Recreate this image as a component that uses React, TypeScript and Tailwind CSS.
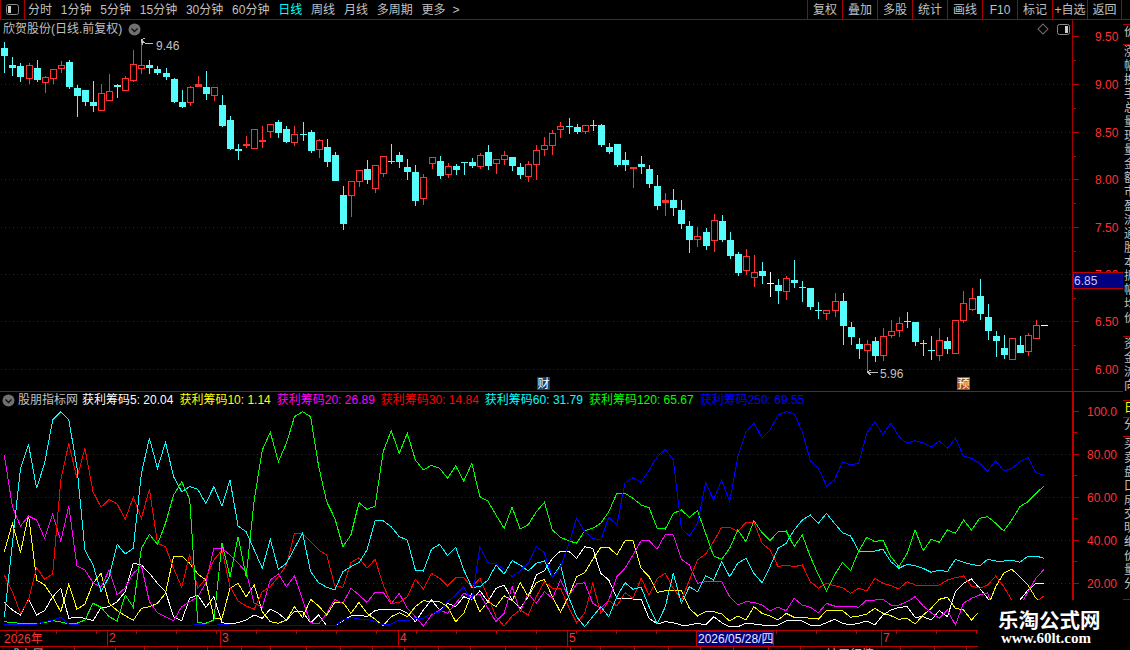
const FONT = "font-['Liberation_Sans','Noto_Sans_CJK_SC',sans-serif]"

const xAt = (i: number) => Math.round(4.33 + 8.06 * i)

// high, low, body top, body bottom, kind
type Candle = [number, number, number, number, string]
const candles: Candle[] = [
  [42,73,48,56,"c"],[57,76,65,68,"c"],[63,82,66,77,"c"],[63,84,65,79,"r"],[60,82,68,80,"c"],[76,93,77,83,"r"],[69,84,69,79,"r"],[61,73,65,69,"r"],[60,89,62,87,"c"],[85,117,88,96,"c"],
  [90,106,90,102,"c"],[81,112,102,106,"c"],[84,111,93,111,"r"],[74,101,91,101,"r"],[84,98,85,87,"c"],[76,91,78,91,"r"],[50,82,64,81,"r"],[40,74,65,69,"r"],[60,74,65,68,"c"],[66,75,69,73,"c"],
  [68,80,73,77,"c"],[78,103,79,102,"c"],[90,108,102,107,"c"],[86,106,87,103,"r"],[76,87,84,87,"r"],[71,100,87,94,"c"],[87,101,87,96,"r"],[95,127,105,126,"c"],[116,150,120,149,"c"],[144,160,149,151,"c"],
  [136,148,144,146,"r"],[129,149,129,149,"r"],[126,148,140,142,"r"],[124,138,124,132,"r"],[120,138,122,133,"c"],[126,143,129,142,"c"],[126,146,134,143,"r"],[122,141,134,135,"c"],[130,153,132,151,"c"],[139,158,140,150,"r"],
  [139,167,147,162,"c"],[152,181,155,181,"c"],[186,230,195,224,"c"],[181,217,181,196,"r"],[170,187,170,182,"r"],[160,184,169,180,"c"],[165,193,165,189,"r"],[156,177,156,174,"r"],[144,164,161,162,"c"],[152,168,155,162,"c"],
  [159,180,167,172,"c"],[165,206,172,201,"c"],[174,205,177,199,"r"],[157,169,157,164,"r"],[156,179,161,176,"c"],[163,178,166,175,"r"],[164,175,166,170,"c"],[162,175,162,163,"c"],[158,168,162,166,"c"],[153,169,155,167,"r"],
  [145,170,152,166,"c"],[159,174,159,164,"r"],[151,165,155,160,"r"],[157,171,157,166,"c"],[163,179,167,175,"c"],[161,182,164,177,"r"],[145,180,150,165,"r"],[137,156,145,150,"r"],[130,155,133,146,"r"],[122,138,126,130,"r"],
  [118,134,126,127,"c"],[124,134,127,132,"c"],[125,134,125,132,"r"],[120,131,125,126,"c"],[124,147,125,145,"c"],[143,154,147,152,"c"],[144,167,144,165,"c"],[152,171,160,165,"c"],[167,188,167,169,"r"],[156,174,164,167,"c"],
  [165,188,169,184,"c"],[175,210,186,206,"c"],[193,216,200,203,"r"],[189,216,200,208,"c"],[200,229,210,224,"c"],[221,253,226,240,"c"],[227,247,236,240,"r"],[228,250,232,246,"c"],[214,252,220,241,"r"],[215,242,221,240,"c"],
  [232,259,240,256,"c"],[252,276,254,273,"c"],[249,275,256,271,"r"],[255,287,272,278,"r"],[262,284,271,276,"c"],[272,297,283,284,"w"],[279,304,285,291,"c"],[276,300,278,292,"r"],[260,288,280,283,"c"],[281,302,287,288,"c"],
  [288,310,288,307,"c"],[302,319,310,311,"c"],[310,320,310,314,"r"],[293,317,301,311,"r"],[293,345,301,326,"c"],[322,345,327,337,"c"],[338,359,344,349,"c"],[340,371,344,351,"r"],[337,362,341,356,"c"],[328,361,336,356,"r"],
  [320,338,331,336,"r"],[317,337,323,331,"r"],[312,328,321,322,"c"],[322,346,322,342,"c"],[340,356,343,344,"c"],[336,360,350,351,"c"],[328,361,340,356,"r"],[337,354,341,349,"c"],[320,354,320,354,"r"],[291,323,303,321,"r"],
  [288,311,298,310,"r"],[279,320,296,314,"c"],[304,340,317,331,"c"],[331,357,336,341,"c"],[335,359,348,355,"c"],[338,360,338,360,"r"],[336,353,345,353,"c"],[333,356,335,352,"r"],[320,339,325,339,"r"],[325,326,325,326,"w"],
]

const COLORS: Record<string, string> = { c: "#54fcfc", r: "#ff3232", w: "#ffffff" }

// y values are 3x the distance below y=400; the tail arrays are measured from y=520
const join = (head: number[], mid: number[], tail: number[]) => [...head, ...mid, ...tail.map((v) => v + 360)]

const series: { color: string; ys: number[] }[] = [
  {
    color: "#ffffff",
    ys: join(
      [607,630,645,597,645,632,590,565,655,652,655,662,623,620,605,575,490,495,520,550,575,650,662,595,585,622,590,668,672,668,660,645,655,627,640,660,635,635,668,645,677,677,662,648,645,650,632,627,627,627],
      [640,665,630,600,630,610,620,590,600,572,605,565,555,600,625,590,525,512,475,453,453,475,440,445,520,540,595,595,597,597,655,672,665,668,675,675,670,675,650,668,680,680,670,672,675,675,675,663,662,663],
      [315,318,308,298,310,315,310,303,315,285,270,262,260,292,290,300,272,290,215,190,177,205,235,280,290,280,240,210,190,190],
    ),
  },
  {
    color: "#ffff00",
    ys: join(
      [455,370,458,345,540,555,590,635,552,628,612,550,520,610,632,647,661,625,620,610,580,468,468,490,522,540,655,655,565,550,590,555,635,665,670,660,620,653,598,618,645,607,607,640,607,640,658,677,650,638],
      [650,620,602,605,605,620,665,640,580,635,605,620,587,602,548,590,548,538,590,637,590,530,518,478,442,442,465,422,422,505,530,577,572,572,572,625,648,635,635,642,663,648,660,620,640,648,660,640,652,652],
      [295,297,272,272,272,292,288,282,265,280,287,298,295,312,285,265,238,232,265,270,300,273,260,200,160,148,170,195,235,255],
    ),
  },
  {
    color: "#ff00ff",
    ys: join(
      [165,320,378,348,360,415,343,423,318,498,510,548,562,510,585,563,520,497,605,638,650,662,620,605,590,550,445,445,465,490,515,610,622,540,522,560,528,600,668,672,640,598,610,565,585,607,577,577,612,580],
      [625,650,678,645,630,640,610,580,590,582,625,665,640,560,635,580,610,575,595,540,590,552,548,610,625,600,530,505,465,422,422,447,403,405,478,495,550,545,545,545,590,615,605,607,615,632,622,632,595,615],
      [262,278,250,258,258,258,262,240,240,238,255,255,245,230,258,278,295,270,315,250,235,225,218,300,300,300,260,215,175,148],
    ),
  },
  {
    color: "#ff0000",
    ys: join(
      [525,575,640,600,503,538,522,240,130,235,145,275,322,298,312,358,292,355,268,430,440,505,562,463,565,535,480,450,560,603,618,628,575,560,530,495,400,400,425,450,465,558,562,488,473,505,478,555,610,608],
      [590,538,568,520,535,558,533,533,562,535,590,650,678,648,630,645,590,545,565,565,620,668,640,550,640,602,618,578,595,535,585,535,520,565,600,540,480,462,425,382,382,395,367,367,430,450,500,495,500,495],
      [185,205,190,197,203,220,205,213,175,190,197,207,185,195,195,195,195,180,173,168,198,205,195,168,200,240,265,260,245,228],
    ),
  },
  {
    color: "#00ffff",
    ys: join(
      [652,430,205,133,265,190,60,35,60,200,450,495,575,530,433,462,445,220,115,205,127,230,275,260,268,310,260,318,240,378,395,450,505,418,508,490,445,400,515,548,562,570,515,500,488,450,362,362,380,410],
      [420,510,513,448,433,467,442,510,562,560,540,495,522,482,495,513,490,483,533,495,590,650,680,650,620,650,590,548,568,562,620,672,620,520,610,560,575,527,540,485,530,490,475,520,548,500,445,430,390,360],
      [-15,10,-20,10,38,48,93,93,93,88,125,145,133,137,145,157,150,155,118,127,133,138,118,123,123,120,127,108,108,115],
    ),
  },
  {
    color: "#00ff00",
    ys: join(
      [665,668,670,670,670,668,662,666,672,670,660,610,622,650,663,585,622,445,403,433,370,285,245,298,668,670,660,430,530,410,530,300,150,97,185,130,50,35,50,200,305,355,440,405,308,328,318,155,92,160],
      [100,180,210,196,205,235,198,243,190,290,303,345,385,322,387,374,335,307,390,412,422,430,392,385,370,335,280,280,295,315,323,385,387,340,330,352,332,400,468,478,445,390,425,362,398,422,395,393,440,405],
      [110,165,212,165,127,152,93,52,65,60,110,140,100,30,92,58,67,30,40,0,30,-5,-10,10,33,0,-40,-55,-80,-102],
    ),
  },
  {
    color: "#0000ff",
    ys: join(
      [672,674,674,674,672,665,660,652,672,674,677,677,677,677,677,677,677,677,677,677,677,677,677,677,672,675,677,672,675,677,677,677,677,677,677,677,677,677,677,677,677,677,660,652,657,657,665,675,672,660],
      [662,655,655,640,637,605,585,560,605,440,488,492,508,530,513,490,440,458,533,500,435,355,395,415,420,352,375,248,233,247,210,170,148,180,385,408,370,248,300,240,305,170,97,68,115,90,45,35,42,95],
      [-178,-155,-102,-120,-175,-165,-170,-260,-295,-257,-290,-250,-230,-238,-232,-218,-238,-215,-245,-192,-185,-170,-147,-178,-147,-155,-175,-188,-142,-134],
    ),
  },
]

const legend = [
  { label: "获利筹码5: 20.04", color: "text-white" },
  { label: "获利筹码10: 1.14", color: "text-[#ffff00]" },
  { label: "获利筹码20: 26.89", color: "text-[#ff00ff]" },
  { label: "获利筹码30: 14.84", color: "text-[#ff0000]" },
  { label: "获利筹码60: 31.79", color: "text-[#00ffff]" },
  { label: "获利筹码120: 65.67", color: "text-[#00ff00]" },
  { label: "获利筹码250: 69.55", color: "text-[#0000ff]" },
]

const periods = ["分时", "1分钟", "5分钟", "15分钟", "30分钟", "60分钟", "日线", "周线", "月线", "多周期"]
const actions = ["复权", "叠加", "多股", "统计", "画线", "F10", "标记", "+自选", "返回"]
const months = [
  { label: "2", x: 107 },
  { label: "3", x: 220 },
  { label: "4", x: 398 },
  { label: "5", x: 567 },
  { label: "7", x: 881 },
]

function PanelIcon({ side }: { side: "left" | "right" }) {
  return (
    <svg width="13" height="11" viewBox="0 0 13 11" className="block">
      <rect x="0.5" y="0.5" width="12" height="10" rx="2" fill="#000" stroke="#8a8a8a" />
      <rect x={side === "left" ? 2 : 8} y="2" width="3" height="7" fill="#d0d0d0" />
    </svg>
  )
}

function ChevronBall() {
  return (
    <svg width="13" height="13" viewBox="0 0 13 13" className="block">
      <circle cx="6.5" cy="6.5" r="6" fill="#707070" />
      <path d="M3.5 5.5 L6.5 8.5 L9.5 5.5" fill="none" stroke="#111" strokeWidth="1.4" />
    </svg>
  )
}

function DottedGrid({ ys, x2 }: { ys: number[]; x2: number }) {
  return (
    <>
      {ys.map((y) => (
        <line key={y} x1={1} x2={x2} y1={y + 0.5} y2={y + 0.5} stroke="#8a0000" strokeDasharray="1 3" />
      ))}
    </>
  )
}

function CandleChart() {
  return (
    <svg width="1072" height="371" viewBox="0 20 1072 371" className="block" shapeRendering="crispEdges">
      <DottedGrid ys={[84, 132, 179, 227, 274, 321, 369]} x2={1072} />
      {candles.map(([high, low, top, bot, kind], i) => {
        const x = xAt(i)
        const color = COLORS[kind]
        const flat = bot - top <= 3
        if (i === 129) return <rect key={i} x={x - 3} y={top} width={7} height={1} fill={color} />
        return (
          <g key={i}>
            <rect x={x} y={high} width={1} height={low - high} fill={color} />
            {kind === "r" && !flat ? (
              <rect x={x - 2.5} y={top + 0.5} width={6} height={bot - top - 1} fill="#000" stroke={color} />
            ) : (
              <rect x={x - 3} y={top} width={7} height={Math.max(bot - top, 1)} fill={color} />
            )}
          </g>
        )
      })}
      <path d="M141 40 L145 43 L153 44 M141 40 L145 38 M141 40 L143 45" fill="none" stroke="#c0c0c0" />
      <path d="M867 372 L878 372 M867 372 L871 370 M867 372 L871 375" fill="none" stroke="#c0c0c0" />
      <text x="156" y="50" fill="#c0c0c0" fontSize="12" fontFamily="Liberation Sans">9.46</text>
      <text x="880" y="378" fill="#c0c0c0" fontSize="12" fontFamily="Liberation Sans">5.96</text>
    </svg>
  )
}

function PriceAxis() {
  const labels = [
    ["9.50", 36],
    ["9.00", 84],
    ["8.50", 132],
    ["8.00", 179],
    ["7.50", 227],
    ["7.00", 274],
    ["6.50", 321],
    ["6.00", 369],
  ] as const
  return (
    <svg width="50" height="371" viewBox="1073 20 50 371" className="block">
      {labels.map(([label, y]) => (
        <g key={label}>
          <rect x={1073} y={y} width={6} height={1} fill="#b00000" />
          <rect x={1073} y={y + 24} width={3} height={1} fill="#b00000" />
          <text x="1095" y={y + 5} fill="#ff3232" fontSize="12" fontFamily="Liberation Sans">{label}</text>
        </g>
      ))}
      <rect x="1073.5" y="272.5" width="50" height="16" fill="#000080" stroke="#c00000" />
      <text x="1074" y="285" fill="#c8c8ff" fontSize="12" fontFamily="Liberation Sans">6.85</text>
    </svg>
  )
}

function LineChart() {
  return (
    <svg width="1072" height="238" viewBox="0 392 1072 238" className="block" shapeRendering="crispEdges">
      <DottedGrid ys={[454, 497, 540, 583]} x2={1072} />
      {series.map((s) => (
        <polyline
          key={s.color}
          fill="none"
          stroke={s.color}
          strokeWidth="1"
          points={s.ys.map((v, i) => `${(4.33 + 8.06 * i).toFixed(1)},${(400 + v / 3).toFixed(1)}`).join(" ")}
        />
      ))}
    </svg>
  )
}

function IndicatorAxis() {
  const labels = [
    ["100.0", 411],
    ["80.00", 454],
    ["60.00", 497],
    ["40.00", 540],
    ["20.00", 583],
  ] as const
  return (
    <svg width="49" height="238" viewBox="1074 392 49 238" className="block">
      {labels.map(([label, y]) => (
        <g key={label}>
          <rect x={1074} y={y} width={5} height={1} fill="#c00000" />
          <rect x={1074} y={y + 21} width={3} height={1} fill="#c00000" />
          <text x="1087" y={y + 5} fill="#ff3232" fontSize="12" fontFamily="Liberation Sans">{label}</text>
        </g>
      ))}
    </svg>
  )
}

function TimeAxis() {
  const ticks = Array.from({ length: 26 }, (_, i) => 16 + i * 40)
  const lowerTicks = [42, 74, 115, 144, 177, 207, 241, 270, 306, 340, 372, 404, 438, 470, 505, 536, 570, 600, 634, 668, 700, 733, 768, 800, 834, 866, 900, 934, 966]
  return (
    <div className="relative h-[20px] w-[1123px] overflow-hidden border-t border-[#c00000]">
      {ticks.map((x) => (
        <div key={x} className="absolute top-0 h-[3px] w-px bg-[#c00000]" style={{ left: x }} />
      ))}
      <div className="absolute left-[4px] top-px text-[12px] leading-[15px] text-[#ff3232]">2026年</div>
      {months.map((m) => (
        <div key={m.label} className="absolute top-0 h-[15px] border-l border-[#c00000] pl-[1px] text-[12px] leading-[15px] text-[#ff3232]" style={{ left: m.x }}>
          {m.label}
        </div>
      ))}
      <div className="absolute left-[696px] top-0 h-[16px] w-[78px] border border-[#c00000] bg-[#000080] pl-[1px] text-[12px] leading-[14px] whitespace-nowrap text-[#e8e8ff]">
        2026/05/28/四
      </div>
      <div className="absolute left-0 top-[15px] h-px w-full bg-[#c00000]" />
      {lowerTicks.map((x) => (
        <div key={x} className="absolute top-[16px] h-[4px] w-px bg-[#c00000]" style={{ left: x }} />
      ))}
      <div className="absolute left-[8px] top-[17px] text-[12px] leading-[14px] text-[#c0c0c0]">成交量</div>
      <div className="absolute left-[826px] top-[17px] text-[12px] leading-[14px] text-[#c0c0c0]">扩展行情</div>
    </div>
  )
}

function SideStrip() {
  const blocks = [
    { chars: "", h: 5, tone: "text-[#c0c0c0]" },
    { chars: "价", h: 20, tone: "text-[#c0c0c0]" },
    { chars: "涨幅换手总量现量金额市盈流通股本振幅均价", h: 292, tone: "text-[#c0c0c0]" },
    { chars: "资金流向", h: 64, tone: "text-[#c0c0c0]" },
    { chars: "日", h: 17, tone: "text-[#ffff00]" },
    { chars: "分", h: 19, tone: "text-[#c0c0c0]" },
    { chars: "买卖盘口成交明细价量分", h: 163, tone: "text-[#c0c0c0]" },
  ]
  return (
    <div className="flex w-[7px] flex-col overflow-hidden">
      {blocks.map((b, i) => (
        <div key={i} className={`w-[7px] shrink-0 overflow-hidden border-b border-[#b00000] ${b.tone}`} style={{ height: b.h }}>
          <div className="w-[12px] text-[12px] leading-[14px] pl-px break-all">{b.chars}</div>
        </div>
      ))}
    </div>
  )
}

export default function App() {
  return (
    <div className={`relative flex h-[650px] w-[1130px] flex-col overflow-hidden bg-black text-[#c0c0c0] ${FONT}`}>
      <header className="flex h-[20px] shrink-0 items-center border-b border-[#a80000] text-[12px] leading-none">
        <div className="flex h-full w-[25px] items-center justify-center border-x border-[#a80000]">
          <PanelIcon side="left" />
        </div>
        <nav className="ml-[3px] flex items-center gap-[8.8px] whitespace-nowrap">
          {periods.map((p) => (
            <span key={p}>{p === "日线" ? <span className="text-[#00ffff]">{p}</span> : p}</span>
          ))}
          <span>更多<span className="ml-[7px]">&gt;</span></span>
        </nav>
        <div className="ml-auto mr-[8px] flex h-full">
          {actions.map((a) => (
            <div key={a} className="flex h-full w-[35px] items-center justify-center border-l border-[#a80000] whitespace-nowrap last:border-r">
              {a}
            </div>
          ))}
        </div>
      </header>

      <div className="flex flex-1">
        <div className="flex w-[1123px] flex-col">
          <section className="relative flex h-[372px] border-b border-[#c00000]">
            <div className="w-[1072px] border-r-0">
              <CandleChart />
            </div>
            <div className="border-l border-[#a80000]">
              <PriceAxis />
            </div>
            <div className="absolute left-[3px] top-[2px] flex items-center gap-[6px] text-[12px] leading-[14px]">
              <span>欣贺股份(日线.前复权)</span>
              <ChevronBall />
            </div>
            <div className="absolute left-[1039px] top-[5px] h-[8px] w-[8px] rotate-45 border border-[#707070]" />
            <div className="absolute left-[1057px] top-[4px]">
              <PanelIcon side="right" />
            </div>
            <div className="absolute left-[537px] top-[357px] flex h-[13px] w-[13px] items-center justify-center bg-[#10406c] text-[12px] leading-none text-white">财</div>
            <div className="absolute left-[957px] top-[357px] flex h-[13px] w-[13px] items-center justify-center bg-[#b04a10] text-[12px] leading-none text-white">预</div>
          </section>

          <section className="relative flex h-[238px]">
            <div className="w-[1072px]">
              <LineChart />
            </div>
            <div className="border-x-0 border-l-2 border-[#c00000]">
              <IndicatorAxis />
            </div>
            <div className="absolute left-[2px] top-[1px] flex items-center whitespace-nowrap text-[12px] leading-[14px]">
              <ChevronBall />
              <span className="ml-[3px] mr-[4px]">股朋指标网</span>
              <div className="flex gap-[6px]">
                {legend.map((l) => (
                  <span key={l.label} className={l.color}>{l.label}</span>
                ))}
              </div>
            </div>
          </section>

          <TimeAxis />
        </div>
        <SideStrip />
      </div>

      <div className="absolute left-[978px] top-[600px] flex h-[50px] w-[152px] flex-col items-start bg-black text-white">
        <div className="mt-[8px] ml-[20px] font-['Noto_Sans_CJK_SC',sans-serif] text-[20.5px] leading-[22px] font-bold">乐淘公式网</div>
        <div className="ml-[23px] font-['Liberation_Serif',serif] text-[15px] leading-[16px] font-bold">www.60lt.com</div>
      </div>
    </div>
  )
}
